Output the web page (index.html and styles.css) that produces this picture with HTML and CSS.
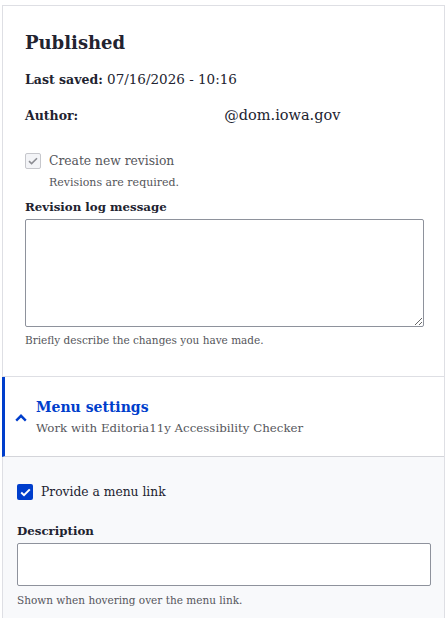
FILE: index.html
```html
<!DOCTYPE html>
<html lang="en">
<head>
  <meta charset="UTF-8">
  <title>Node meta - Published</title>
  <link rel="stylesheet" href="styles.css">
</head>
<body>

  <div class="card">
    <div class="meta">
      <h2 class="status">Published</h2>
      <p class="meta-item"><strong>Last saved:</strong> 07/16/2026 - 10:16</p>
      <p class="meta-item author"><strong>Author:</strong> <span class="author-name">@dom.iowa.gov</span></p>

      <div class="check-row disabled">
        <span class="box box-disabled">
          <svg width="10" height="8" viewBox="0 0 10 8"><path d="M1 4.2 3.6 6.6 9 1.2" fill="none" stroke="#8c8d93" stroke-width="1.6"/></svg>
        </span>
        <label>Create new revision</label>
      </div>
      <div class="check-desc">Revisions are required.</div>

      <label class="field-label" for="log">Revision log message</label>
      <textarea id="log" class="log"></textarea>
      <div class="field-desc">Briefly describe the changes you have made.</div>
    </div>

    <!-- Menu settings -->
    <div class="details">
      <div class="summary">
        <svg class="chevron" width="12" height="8" viewBox="0 0 12 8"><path d="M1.2 6.6 6 1.8 10.8 6.6" fill="none" stroke="#003ecc" stroke-width="2.4"/></svg>
        <div>
          <div class="summary-title">Menu settings</div>
          <div class="summary-sub">Work with Editoria11y Accessibility Checker</div>
        </div>
      </div>
      <div class="details-body">
        <div class="check-row">
          <span class="box box-checked">
            <svg width="11" height="9" viewBox="0 0 11 9"><path d="M1.2 4.6 4 7.2 9.8 1.4" fill="none" stroke="#fff" stroke-width="2"/></svg>
          </span>
          <label>Provide a menu link</label>
        </div>

        <label class="field-label desc-label" for="desc">Description</label>
        <input type="text" id="desc" class="desc-input">
        <div class="field-desc">Shown when hovering over the menu link.</div>
      </div>
    </div>
  </div>

</body>
</html>
```

FILE: styles.css
```css
:root {
  --text: #222330;
  --muted: #55565b;
  --blue: #003ecc;
  --border: #dedfe4;
  --input-border: #8e929c;
}

body {
  margin: 0;
  background: #fff;
  color: var(--text);
  font-family: "DejaVu Serif", serif;
}

.card {
  margin: 5px 2px 0 2px;
  border: 1px solid var(--border);
}

.meta {
  padding: 25px 20px 28px 22px;
}

.status {
  margin: 0 0 14px 0;
  font-size: 18px;
  line-height: 24px;
  font-weight: bold;
}

.meta-item {
  margin: 0 0 15px 0;
  font-size: 13.5px;
  line-height: 20px;
}

.meta-item strong {
  font-size: 12.5px;
}

.author strong {
  display: inline-block;
  width: 195px;
}

.author-name {
  font-size: 14.5px;
}

.check-row {
  display: flex;
  align-items: center;
  gap: 8px;
  font-size: 12.3px;
  line-height: 20px;
}

.check-row.disabled {
  margin-top: 25px;
  color: var(--muted);
}

.box {
  width: 16px;
  height: 16px;
  box-sizing: border-box;
  border-radius: 2px;
  display: flex;
  align-items: center;
  justify-content: center;
  flex-shrink: 0;
}

.box-disabled {
  border: 1px solid #c6c7cc;
  background: #f3f4f7;
}

.box-checked {
  background: var(--blue);
}

.check-desc {
  margin: 4px 0 0 24px;
  font-size: 11px;
  line-height: 16px;
  color: var(--muted);
}

.field-label {
  display: block;
  margin-top: 7px;
  font-size: 11.8px;
  line-height: 18px;
  font-weight: bold;
}

.log {
  display: block;
  box-sizing: border-box;
  width: 100%;
  height: 108px;
  margin: 3px 0 0 0;
  border: 1px solid var(--input-border);
  border-radius: 2px;
  font-family: inherit;
}

.field-desc {
  margin-top: 5px;
  font-size: 10.5px;
  line-height: 16px;
  color: var(--muted);
}

.details {
  border-top: 1px solid var(--border);
}

.summary {
  display: flex;
  align-items: center;
  gap: 9px;
  height: 80px;
  box-sizing: border-box;
  margin-left: -1px;
  padding-left: 10px;
  border-left: 3px solid var(--blue);
  border-bottom: 1px solid #d4d5da;
}

.chevron {
  margin-top: 2px;
}

.summary-title {
  font-size: 14px;
  line-height: 20px;
  font-weight: bold;
  color: var(--blue);
}

.summary-sub {
  margin-top: 2px;
  font-size: 11.8px;
  line-height: 18px;
  color: var(--muted);
}

.details-body {
  background: #f8f9fb;
  padding: 25px 13px 11px 14px;
}

.desc-label {
  margin-top: 20px;
}

.desc-input {
  display: block;
  box-sizing: border-box;
  width: 100%;
  height: 43px;
  margin: 3px 0 0 0;
  border: 1px solid var(--input-border);
  border-radius: 2px;
  background: #fff;
}

.details-body .field-desc {
  margin-top: 6px;
}
```
